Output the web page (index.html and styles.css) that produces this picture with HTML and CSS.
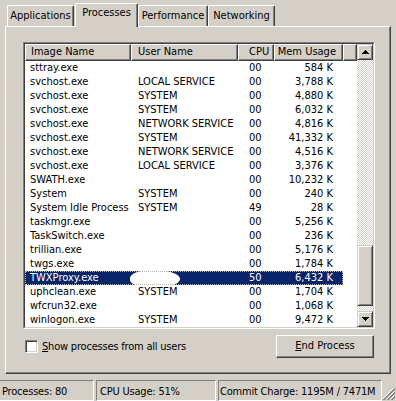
FILE: index.html
```html
<!DOCTYPE html>
<html lang="en">
<head>
  <meta charset="UTF-8">
  <title>Windows Task Manager</title>
  <link rel="stylesheet" href="styles.css">
</head>
<body>
  <div class="tabs">
    <div class="tab tab-apps">Applications</div>
    <div class="tab tab-proc active">Processes</div>
    <div class="tab tab-perf">Performance</div>
    <div class="tab tab-net">Networking</div>
  </div>

  <div class="panel">
    <div class="list">
      <div class="list-inner">
        <div class="cols">
          <div class="head">
            <div class="hcell c-name">Image Name</div>
            <div class="hcell c-user">User Name</div>
            <div class="hcell c-cpu">CPU</div>
            <div class="hcell c-mem">Mem Usage</div>
            <div class="hcell c-blank"></div>
          </div>
          <div class="rows">
            <div class="row"><span class="c-name">sttray.exe</span><span class="c-user"></span><span class="c-cpu">00</span><span class="c-mem">584 K</span></div>
            <div class="row"><span class="c-name">svchost.exe</span><span class="c-user">LOCAL SERVICE</span><span class="c-cpu">00</span><span class="c-mem">3,788 K</span></div>
            <div class="row"><span class="c-name">svchost.exe</span><span class="c-user">SYSTEM</span><span class="c-cpu">00</span><span class="c-mem">4,880 K</span></div>
            <div class="row"><span class="c-name">svchost.exe</span><span class="c-user">SYSTEM</span><span class="c-cpu">00</span><span class="c-mem">6,032 K</span></div>
            <div class="row"><span class="c-name">svchost.exe</span><span class="c-user">NETWORK SERVICE</span><span class="c-cpu">00</span><span class="c-mem">4,816 K</span></div>
            <div class="row"><span class="c-name">svchost.exe</span><span class="c-user">SYSTEM</span><span class="c-cpu">00</span><span class="c-mem">41,332 K</span></div>
            <div class="row"><span class="c-name">svchost.exe</span><span class="c-user">NETWORK SERVICE</span><span class="c-cpu">00</span><span class="c-mem">4,516 K</span></div>
            <div class="row"><span class="c-name">svchost.exe</span><span class="c-user">LOCAL SERVICE</span><span class="c-cpu">00</span><span class="c-mem">3,376 K</span></div>
            <div class="row"><span class="c-name">SWATH.exe</span><span class="c-user"></span><span class="c-cpu">00</span><span class="c-mem">10,232 K</span></div>
            <div class="row"><span class="c-name">System</span><span class="c-user">SYSTEM</span><span class="c-cpu">00</span><span class="c-mem">240 K</span></div>
            <div class="row"><span class="c-name">System Idle Process</span><span class="c-user">SYSTEM</span><span class="c-cpu">49</span><span class="c-mem">28 K</span></div>
            <div class="row"><span class="c-name">taskmgr.exe</span><span class="c-user"></span><span class="c-cpu">00</span><span class="c-mem">5,256 K</span></div>
            <div class="row"><span class="c-name">TaskSwitch.exe</span><span class="c-user"></span><span class="c-cpu">00</span><span class="c-mem">236 K</span></div>
            <div class="row"><span class="c-name">trillian.exe</span><span class="c-user"></span><span class="c-cpu">00</span><span class="c-mem">5,176 K</span></div>
            <div class="row"><span class="c-name">twgs.exe</span><span class="c-user"></span><span class="c-cpu">00</span><span class="c-mem">1,784 K</span></div>
            <div class="row sel"><span class="c-name">TWXProxy.exe</span><span class="c-user"><i class="blob"></i></span><span class="c-cpu">50</span><span class="c-mem">6,432 K</span></div>
            <div class="row"><span class="c-name">uphclean.exe</span><span class="c-user">SYSTEM</span><span class="c-cpu">00</span><span class="c-mem">1,704 K</span></div>
            <div class="row"><span class="c-name">wfcrun32.exe</span><span class="c-user"></span><span class="c-cpu">00</span><span class="c-mem">1,068 K</span></div>
            <div class="row"><span class="c-name">winlogon.exe</span><span class="c-user">SYSTEM</span><span class="c-cpu">00</span><span class="c-mem">9,472 K</span></div>
          </div>
        </div>
        <div class="scroll">
          <div class="sbtn">
            <svg width="7" height="4" viewBox="0 0 7 4"><path d="M3 0h1v1h1v1h1v1h1v1H0V3h1V2h1V1h1z" fill="#000"/></svg>
          </div>
          <div class="track-top"></div>
          <div class="thumb"></div>
          <div class="track-bot"></div>
          <div class="sbtn">
            <svg width="7" height="4" viewBox="0 0 7 4"><path d="M0 0h7v1H6v1H5v1H4v1H3V3H2V2H1V1H0z" fill="#000"/></svg>
          </div>
        </div>
      </div>
    </div>

    <div class="controls">
      <label class="show-all"><span class="check"></span><span><u>S</u>how processes from all users</span></label>
      <div class="btn"><u>E</u>nd Process</div>
    </div>
  </div>

  <div class="status">
    <div class="sp sp-proc">Processes: 80</div>
    <div class="sp sp-cpu">CPU Usage: 51%</div>
    <div class="sp sp-mem">Commit Charge: 1195M / 7471M</div>
    <div class="grip">
      <svg width="12" height="12" viewBox="0 0 12 12" shape-rendering="crispEdges">
        <path d="M11 0L0 11M11 4L4 11M11 8L8 11" stroke="#fff" fill="none"/>
        <path d="M12 0L0 12M12 1L1 12M12 4L4 12M12 5L5 12M12 8L8 12M12 9L9 12" stroke="#808080" fill="none"/>
      </svg>
    </div>
  </div>
</body>
</html>
```

FILE: styles.css
```css
* {
  box-sizing: border-box;
  margin: 0;
  padding: 0;
}

body {
  width: 396px;
  height: 401px;
  overflow: hidden;
  background-color: #d4d0c8;
  font-family: "DejaVu Sans Condensed", "DejaVu Sans", sans-serif;
  font-stretch: condensed;
  font-size: 11px;
  color: #000000;
}

/* tabs */
.tabs {
  position: relative;
  z-index: 1;
  display: flex;
  align-items: flex-end;
  height: 26px;
  padding-left: 7px;
}

.tab {
  height: 21px;
  border-top: 1px solid #ffffff;
  border-left: 1px solid #ffffff;
  border-right: 1px solid #404040;
  border-radius: 2px 2px 0 0;
  box-shadow: inset -1px 0 #808080;
  text-align: center;
  line-height: 19px;
  white-space: nowrap;
}

.tab.active {
  height: 24px;
  margin-bottom: -1px;
  background-color: #d4d0c8;
  line-height: 18px;
}

.tab-apps { width: 67px; }
.tab-proc { width: 63px; margin-left: 1px; }
.tab-perf { width: 70px; }
.tab-net { width: 67px; }

/* panel */
.panel {
  width: 386px;
  height: 348px;
  margin-left: 5px;
  border-top: 1px solid #ffffff;
  border-left: 1px solid #ffffff;
  border-right: 1px solid #404040;
  border-bottom: 1px solid #404040;
  box-shadow: inset -1px -1px #808080;
  padding: 15px 0 0 17px;
}

.list {
  width: 352px;
  border: 1px solid;
  border-color: #808080 #ffffff #ffffff #808080;
}

.list-inner {
  display: flex;
  height: 285px;
  border: 1px solid;
  border-color: #404040 #d4d0c8 #d4d0c8 #404040;
  background-color: #ffffff;
}

.cols {
  width: 332px;
}

.head {
  display: flex;
  height: 17px;
}

.hcell {
  height: 17px;
  border: 1px solid;
  border-color: #ffffff #404040 #404040 #ffffff;
  box-shadow: inset -1px -1px #808080;
  background-color: #d4d0c8;
  line-height: 14px;
  white-space: nowrap;
}

.c-name { width: 106px; padding-left: 5px; }
.c-user { width: 107px; padding-left: 6px; }
.c-cpu { width: 36px; padding-left: 10px; }
.c-mem { width: 69px; text-align: right; padding-right: 10px; }
.c-blank { width: 14px; }

.head .c-mem { padding-right: 6px; }

.row {
  display: flex;
  width: 318px;
  height: 14px;
  line-height: 14px;
  white-space: nowrap;
}

.row span {
  display: block;
  overflow: visible;
}

.row .c-user { padding-left: 7px; }
.row .c-cpu { padding-left: 11px; }

.row.sel {
  background-color: #0a246a;
  color: #ffffff;
  outline: 1px dotted #b8b8b8;
  outline-offset: -1px;
}

.blob {
  display: block;
  width: 50px;
  height: 18px;
  margin: -1px 0 0 -8px;
  background-color: #ffffff;
  border-radius: 45% 50% 50% 45%;
}

/* scrollbar */
.scroll {
  display: flex;
  flex-direction: column;
  width: 16px;
  background-color: #ffffff;
  background-image: conic-gradient(#ffffff 25%, #d4d0c8 0 50%, #ffffff 0 75%, #d4d0c8 0);
  background-size: 2px 2px;
}

.sbtn,
.thumb {
  border: 1px solid;
  border-color: #d4d0c8 #404040 #404040 #d4d0c8;
  box-shadow: inset 1px 1px #ffffff, inset -1px -1px #808080;
  background-color: #d4d0c8;
}

.sbtn {
  display: flex;
  align-items: center;
  justify-content: center;
  height: 16px;
}

.sbtn svg {
  display: block;
}

.track-top { height: 185px; }
.thumb { height: 61px; }
.track-bot { flex: 1; }

/* checkbox + button */
.controls {
  display: flex;
  justify-content: space-between;
  align-items: center;
  width: 352px;
  height: 23px;
  margin-top: 6px;
}

.show-all {
  display: flex;
  align-items: center;
  margin-left: 2px;
  white-space: nowrap;
  letter-spacing: -0.2px;
}

.check {
  width: 13px;
  height: 13px;
  margin-right: 4px;
  border: 1px solid;
  border-color: #808080 #ffffff #ffffff #808080;
  box-shadow: inset 1px 1px #404040, inset -1px -1px #d4d0c8;
  background-color: #ffffff;
}

.btn {
  width: 98px;
  height: 23px;
  margin-right: 1px;
  border: 1px solid;
  border-color: #ffffff #404040 #404040 #ffffff;
  box-shadow: inset -1px -1px #808080;
  text-align: center;
  line-height: 20px;
}

/* status bar */
.status {
  display: flex;
  height: 21px;
  margin-top: 6px;
}

.sp {
  height: 21px;
  margin-right: 2px;
  padding-top: 2px;
  border: 1px solid;
  border-color: #808080 #ffffff #ffffff #808080;
  line-height: 18px;
  white-space: nowrap;
  overflow: hidden;
  letter-spacing: -0.2px;
}

.sp-proc { width: 95px; margin-left: -1px; padding-left: 2px; }
.sp-cpu { width: 120px; padding-left: 3px; }
.sp-mem { width: 164px; margin-right: 0; padding-left: 1px; }

.grip {
  display: flex;
  align-items: flex-end;
  justify-content: flex-end;
  flex: 1;
  padding: 0 1px 1px 0;
}

.grip svg {
  display: block;
}
```
